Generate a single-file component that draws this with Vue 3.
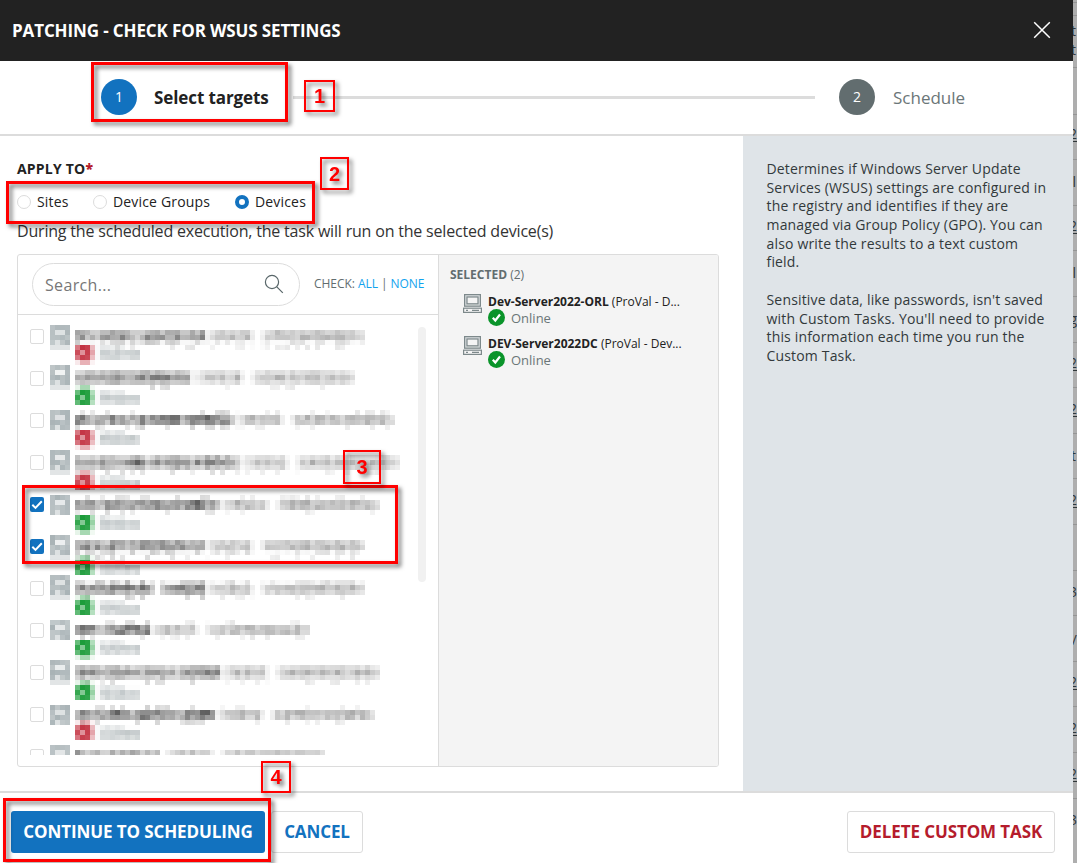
<script setup>
const CELL = 5

// Vertical weight of the four cell lines that make up an obscured name
const shapes = {
  top: [0.8, 1, 0.28, 0],
  mid: [0.55, 1, 0.55, 0],
  low: [0.08, 1, 0.9, 0.08],
  deep: [0.25, 1, 0.68, 0],
  cut: [0.8, 0, 0, 0],
}

// Darkness per cell of the site and group part, 0 to 9, aligned to the row's end
const group = '12343433410133434434434443443432'
const devices = [
  { icon: 325, rows: 5, y: 330, shape: 'top', name: '55443556576434655555645546', end: 365, status: 345, tail: 1 },
  { icon: 365, rows: 5, y: 370, shape: 'mid', name: '45555556765556666664555', end: 355, status: 390, online: 1 },
  { icon: 410, rows: 4, y: 410, shape: 'low', name: '66545446554457566767746676766663', end: 395, status: 430, tail: 1 },
  { icon: 450, rows: 5, y: 455, shape: 'mid', name: '554546555556763465567564657675643', end: 400, status: 475 },
  { icon: 495, rows: 4, y: 495, shape: 'low', name: '55554465555556567656546786553', end: 380, status: 515, online: 1, checked: 1, tail: 1 },
  { icon: 535, rows: 5, y: 540, shape: 'top', name: '55646446554557656655664556', end: 365, status: 560, online: 1, checked: 1 },
  { icon: 575, rows: 5, y: 580, shape: 'deep', name: '56556567667667630455677667', end: 365, status: 600, online: 1 },
  { icon: 620, rows: 4, y: 620, shape: 'low', name: '676643456776757', end: 310, status: 640, online: 1, tail: 1 },
  { icon: 660, rows: 5, y: 665, shape: 'mid', name: '56565457655454655645356666677', end: 380, status: 685, online: 1 },
  { icon: 705, rows: 4, y: 705, shape: 'low', name: '5655555675546777666554665776', end: 375, status: 725 },
  { icon: 745, rows: 4, y: 750, shape: 'cut', name: '643553354546546350', end: 325, status: 775, online: 1 },
]

const noise = (x, y) => {
  const v = Math.sin(x * 12.9898 + y * 78.233) * 43758.5453
  return v - Math.floor(v)
}

function mosaic(d) {
  const cells = []
  const add = (x, y, fill, opacity) => {
    if (opacity > 0.015) cells.push({ x, y, fill, opacity: +opacity.toFixed(2) })
  }

  for (let r = 0; r < d.rows; r++) {
    for (let c = 0; c < 4; c++) {
      let o = 0.72 + noise(c + d.icon, r) * 0.28
      if (r === 1 && (c === 1 || c === 2)) o = 0.15 + noise(1, d.icon) * 0.25
      if (d.rows === 5 && r === 4) o = 0.34
      if (r === 3 && c === 1) o = 0.4
      add(50 + c * CELL, d.icon + r * CELL, '#a9b3b6', o)
    }
  }

  const count = (d.end - 75) / CELL
  for (let i = 0; i < count; i++) {
    const x = 75 + i * CELL
    const bold = i < d.name.length
    const level = bold ? +d.name[i] : +(group[group.length - count + i] || 1)
    shapes[d.shape].forEach((w, r) => {
      const y = d.y + r * CELL
      let o = level * (bold ? 0.085 : 0.078) * (0.72 + noise(x, y) * 0.5)
      if (w < 0.3) o *= noise(x + 7, y) < 0.45 ? 0.1 : w < 0.1 ? 0.3 : 0.45
      else o *= w
      if (w < 0.1 && noise(x + 7, y) < 0.7) o = 0
      add(x, y, '#222', o)
    })
  }

  const light = [0.1, 0.36, 0.36, 0.06]
  const badge = [
    [0.62, 0.92, 0.88, 0.32],
    [0.82, 0.5, 0.88, 0.42],
    [0.64, 0.88, 0.84, 0.3],
  ]
  const ink = d.online ? '#0a942a' : '#bf2636'
  light.forEach((o, c) => add(75 + c * CELL, d.status + (d.tail ? 15 : -5), ink, o))
  badge.forEach((line, r) => line.forEach((o, c) => add(75 + c * CELL, d.status + r * CELL, ink, o)))

  for (let r = 0; r < 3; r++) {
    for (let x = 95; x < 140; x += CELL) {
      let o = [0.12, 0.34, 0.24][r] + noise(x, d.status + r) * 0.16
      if (r === 0 && x > 120) o = 0.02
      if (x === 95) o = 0.05
      add(x, d.status + r * CELL, '#879396', o)
    }
  }
  return cells
}

const rows = devices.map((d, i) => ({ top: 322 + i * 42, checked: !!d.checked, cells: mosaic(d) }))

const selected = [
  { name: 'Dev-Server2022-ORL', site: '(ProVal - D...' },
  { name: 'DEV-Server2022DC', site: '(ProVal - Dev...' },
]

const lines = [2, 15, 67, 114, 159, 205, 250, 296, 342, 387, 433, 478, 524, 570, 615, 661, 706, 752, 798]
const fragments = [
  ['t', 31, 0], ['t', 50, 0], ['2', 134, 1], ['l', 182, 0], ['2', 226, 1], ['l', 273, 0], ['g', 319, 0], ['2', 363, 1],
  ['2', 409, 1], ['t', 456, 0], ['2', 500, 1], ['3', 592, 0], ['/', 640, 0], ['2', 682, 1], ['2', 728, 1], ['2', 774, 1], ['3', 820, 0],
]
</script>

<template>
  <div class="screen">
    <div class="dialog">
      <header class="title">
        <h1>PATCHING - CHECK FOR WSUS SETTINGS</h1>
        <svg width="18" height="18" viewBox="0 0 18 18"><path d="M1.2 1.2 16.8 16.8M16.8 1.2 1.2 16.8" fill="none" stroke="#fff" stroke-width="1.5" /></svg>
      </header>

      <nav class="steps">
        <span class="num active">1</span>
        <span class="step-name active">Select targets</span>
        <span class="track"></span>
        <span class="num">2</span>
        <span class="step-name">Schedule</span>
      </nav>

      <div class="body">
        <main class="main">
          <div class="label">APPLY TO<b>*</b></div>
          <div class="radios">
            <span class="radio sites"><i></i>Sites</span>
            <span class="radio groups"><i></i>Device Groups</span>
            <span class="radio"><i class="on"></i>Devices</span>
          </div>
          <p class="hint">During the scheduled execution, the task will run on the selected device(s)</p>
          <div class="panel">
            <section class="available">
              <div class="filter">
                <div class="search">
                  <span>Search...</span>
                  <svg width="20" height="20" viewBox="0 0 20 20"><g fill="none" stroke="#59676a" stroke-width="1.2"><circle cx="8" cy="8" r="6.6" /><path d="m12.8 12.8 6 6" /></g></svg>
                </div>
                <div class="check-links">CHECK: <a>ALL</a> | <a>NONE</a></div>
              </div>
              <div class="list">
                <div class="rows">
                  <div v-for="row in rows" :key="row.top" class="row">
                    <span class="box" :class="{ checked: row.checked }">
                      <svg v-if="row.checked" width="14" height="15" viewBox="0 0 14 15"><path d="m2.3 7.7 3.2 3.2 6.3-6.6" fill="none" stroke="#fff" stroke-width="2" /></svg>
                    </span>
                    <svg class="mosaic" width="350" height="42" :viewBox="`50 ${row.top} 350 42`" shape-rendering="crispEdges">
                      <rect v-for="(c, k) in row.cells" :key="k" :x="c.x" :y="c.y" width="5" height="5" :fill="c.fill" :fill-opacity="c.opacity" />
                    </svg>
                  </div>
                </div>
                <div class="thumb"></div>
              </div>
            </section>
            <section class="selected">
              <div class="count"><b>SELECTED</b> (2)</div>
              <div v-for="s in selected" :key="s.name" class="device">
                <svg class="pc" width="19" height="19" viewBox="0 0 19 19">
                  <g fill="#f4f4f4" stroke="#7d898b" stroke-width="1.2">
                    <rect x="1.6" y=".6" width="15.8" height="11.6" fill="#d5dadb" />
                    <rect x="4" y="3" width="11" height="6.8" />
                    <rect x=".6" y="14.2" width="17.8" height="4.2" />
                    <path d="M3 16.4h2M9 16.4h7" />
                  </g>
                </svg>
                <div class="info">
                  <div class="name"><b>{{ s.name }}</b> <span>{{ s.site }}</span></div>
                  <div class="status">
                    <svg width="17" height="17" viewBox="0 0 17 17"><circle cx="8.5" cy="8.5" r="8.5" fill="#0a942a" /><path d="m4.8 8.8 2.5 2.7 4.7-6" fill="none" stroke="#fff" stroke-width="2.2" /></svg>
                    <span>Online</span>
                  </div>
                </div>
              </div>
            </section>
          </div>
        </main>
        <aside class="about">
          <p>Determines if Windows Server Update<br>Services (WSUS) settings are configured in<br>the registry and identifies if they are<br>managed via Group Policy (GPO). You can<br>also write the results to a text custom<br>field.</p>
          <p>Sensitive data, like passwords, isn't saved<br>with Custom Tasks. You'll need to provide<br>this information each time you run the<br>Custom Task.</p>
        </aside>
      </div>

      <footer class="actions">
        <button class="primary">CONTINUE TO SCHEDULING</button>
        <button class="cancel">CANCEL</button>
        <button class="delete">DELETE CUSTOM TASK</button>
      </footer>
    </div>

    <svg class="backdrop" width="4" height="863" viewBox="0 0 4 863">
      <rect width="4" height="863" fill="#aeaeae" />
      <rect v-for="y in lines" :key="y" x="0" :y="y" width="4" height="1" fill="#959595" />
      <g v-for="f in fragments" :key="f[1]">
        <text :x="f[0] === 'l' || f[0] === 't' ? 3 : 4" :y="f[1] + 5" text-anchor="end" font-size="14" fill="#30373a">{{ f[0] }}</text>
        <rect v-if="f[2]" x="0" :y="f[1] + 7" width="4" height="1" fill="#30373a" />
      </g>
    </svg>

    <div class="mark m1"></div>
    <div class="mark m2"></div>
    <div class="mark m3"></div>
    <div class="mark m4"></div>
    <div class="tag t1">1</div>
    <div class="tag t2">2</div>
    <div class="tag t3">3</div>
    <div class="tag t4">4</div>
  </div>
</template>

<style>
body { margin: 0; overflow: hidden; }
</style>

<style scoped>
.screen { position: relative; display: flex; width: 1077px; height: 863px; overflow: hidden; font-family: "Open Sans", "Noto Sans", sans-serif; font-size: 14px; color: #222; background: #fff; }
.screen * { box-sizing: border-box; }
.dialog { width: 1073px; height: 863px; display: flex; flex-direction: column; }
.backdrop { display: block; flex: none; overflow: hidden; }
.title { height: 61px; flex: none; background: #222; color: #fff; display: flex; align-items: center; justify-content: space-between; padding: 0 22.5px 2px 12px; }
h1 { margin: 0; font-size: 17px; line-height: 22px; font-weight: 700; letter-spacing: -.12px; padding-top: 2px; white-space: nowrap; }
.steps { height: 75px; flex: none; border-bottom: 2px solid #dcdcdc; display: flex; align-items: center; padding: 0 0 1px 101px; }
.num { width: 36px; height: 36px; flex: none; border-radius: 50%; background: #626d6f; color: #fff; font-size: 14px; line-height: 36px; text-align: center; }
.num.active { background: #1272bf; }
.step-name { margin-left: 18px; padding-top: 2px; font-size: 17px; line-height: 24px; color: #6b7678; white-space: nowrap; }
.step-name.active { margin-left: 17px; color: #222; font-weight: 700; letter-spacing: -.1px; width: 116px; }
.track { width: 522px; height: 3px; margin: 0 24px 0 23px; background: #dcdcdc; }
.body { height: 657px; flex: none; display: flex; border-bottom: 2px solid #dcdcdc; }
.main { width: 743px; padding: 23px 0 0 17px; }
.label { font-size: 14px; line-height: 20px; font-weight: 700; letter-spacing: .2px; }
.label b { color: #b51c2c; }
.radios { display: flex; margin-top: 13px; height: 20px; letter-spacing: .17px; }
.radio { display: flex; align-items: center; gap: 6px; line-height: 20px; white-space: nowrap; }
.radio i { width: 14px; height: 14px; border: 1px solid #dcdcdc; border-radius: 50%; }
.radio i.on { border: 4.5px solid #1272bf; }
.sites { width: 76px; }
.groups { width: 142px; }
.hint { margin: 8px 0 0; font-size: 16px; line-height: 22px; letter-spacing: -.19px; color: #333; white-space: nowrap; }
.panel { width: 702px; height: 513px; margin-top: 12px; border: 1px solid #dcdcdc; border-radius: 3px; display: flex; overflow: hidden; }
.available { width: 421px; border-right: 1px solid #dcdcdc; }
.filter { height: 60px; border-bottom: 1px solid #dcdcdc; display: flex; align-items: center; padding: 0 0 1px 14px; }
.search { width: 268px; height: 43px; border: 1px solid #dcdcdc; border-radius: 22px; display: flex; align-items: center; justify-content: space-between; padding: 0 15px 0 12px; color: #777; font-size: 16px; letter-spacing: .35px; }
.search span { padding-top: 1px; }
.check-links { margin: -2px 0 0 14px; font-size: 12px; letter-spacing: -.05px; color: #626d6f; white-space: nowrap; }
.check-links a { color: #12a3ee; }
.list { display: flex; padding-top: 7px; }
.rows { width: 400px; height: 433px; overflow: hidden; padding-left: 12px; }
.row { height: 42px; display: flex; }
.box { width: 14px; height: 15px; margin: 7px 6px 0 0; flex: none; border: 1px solid #dcdcdc; border-radius: 2px; }
.box.checked { border: 0; background: #1272bf; }
.box svg { display: block; }
.mosaic { display: block; flex: none; overflow: visible; }
.thumb { width: 8px; height: 255px; margin-top: 5px; border-radius: 4px; background: #f1f1f1; }
.selected { flex: 1; background: #f4f4f4; padding: 11px 0 0 11px; }
.count { font-size: 12px; line-height: 18px; color: #626d6f; }
.device { display: flex; height: 42px; padding-left: 13px; }
.count + .device { margin-top: 8px; }
.pc { margin-top: 2px; margin-right: 6px; }
.info { white-space: nowrap; }
.name { font-size: 12px; line-height: 18px; padding-top: 1px; }
.status { display: flex; align-items: center; height: 17px; margin-top: -2px; font-size: 13px; color: #6b7678; gap: 6px; }
.about { width: 330px; background: #dfe4e8; color: #32393b; padding: 24px 0 0 23.5px; line-height: 18.67px; letter-spacing: .17px; white-space: nowrap; }
.about p { margin: 0 0 19px; }
.actions { flex: 1; display: flex; align-items: flex-start; padding: 18px 18px 0 11px; }
button { height: 42px; border: 1px solid #dcdcdc; border-radius: 3px; background: #fff; font: 700 17px/22px "Open Sans", "Noto Sans", sans-serif; letter-spacing: -.1px; padding: 0; white-space: nowrap; }
.primary { width: 254px; border: 0; background: #1272bf; color: #fff; }
.cancel { width: 92px; margin-left: 6px; color: #1272bf; }
.delete { width: 208px; margin-left: auto; color: #b51c2c; }
.mark, .tag { position: absolute; border: 3px solid #f00; filter: drop-shadow(3px 3px 2px rgba(0, 0, 0, .55)); }
.m1 { left: 91px; top: 62px; width: 197px; height: 60px; }
.m2 { left: 6px; top: 181px; width: 309px; height: 43px; }
.m3 { left: 22px; top: 485px; width: 376px; height: 79px; }
.m4 { left: 3px; top: 798px; width: 268px; height: 64px; }
.tag { display: flex; align-items: center; justify-content: center; border-width: 2px; color: #f00; font: bold 20px/20px "Liberation Sans", Arial, sans-serif; }
.t1 { left: 304px; top: 80px; width: 31px; height: 32px; }
.t2 { left: 320px; top: 157px; width: 29px; height: 33px; }
.t3 { left: 343px; top: 450px; width: 38px; height: 34px; }
.t4 { left: 261px; top: 761px; width: 30px; height: 32px; }
</style>
